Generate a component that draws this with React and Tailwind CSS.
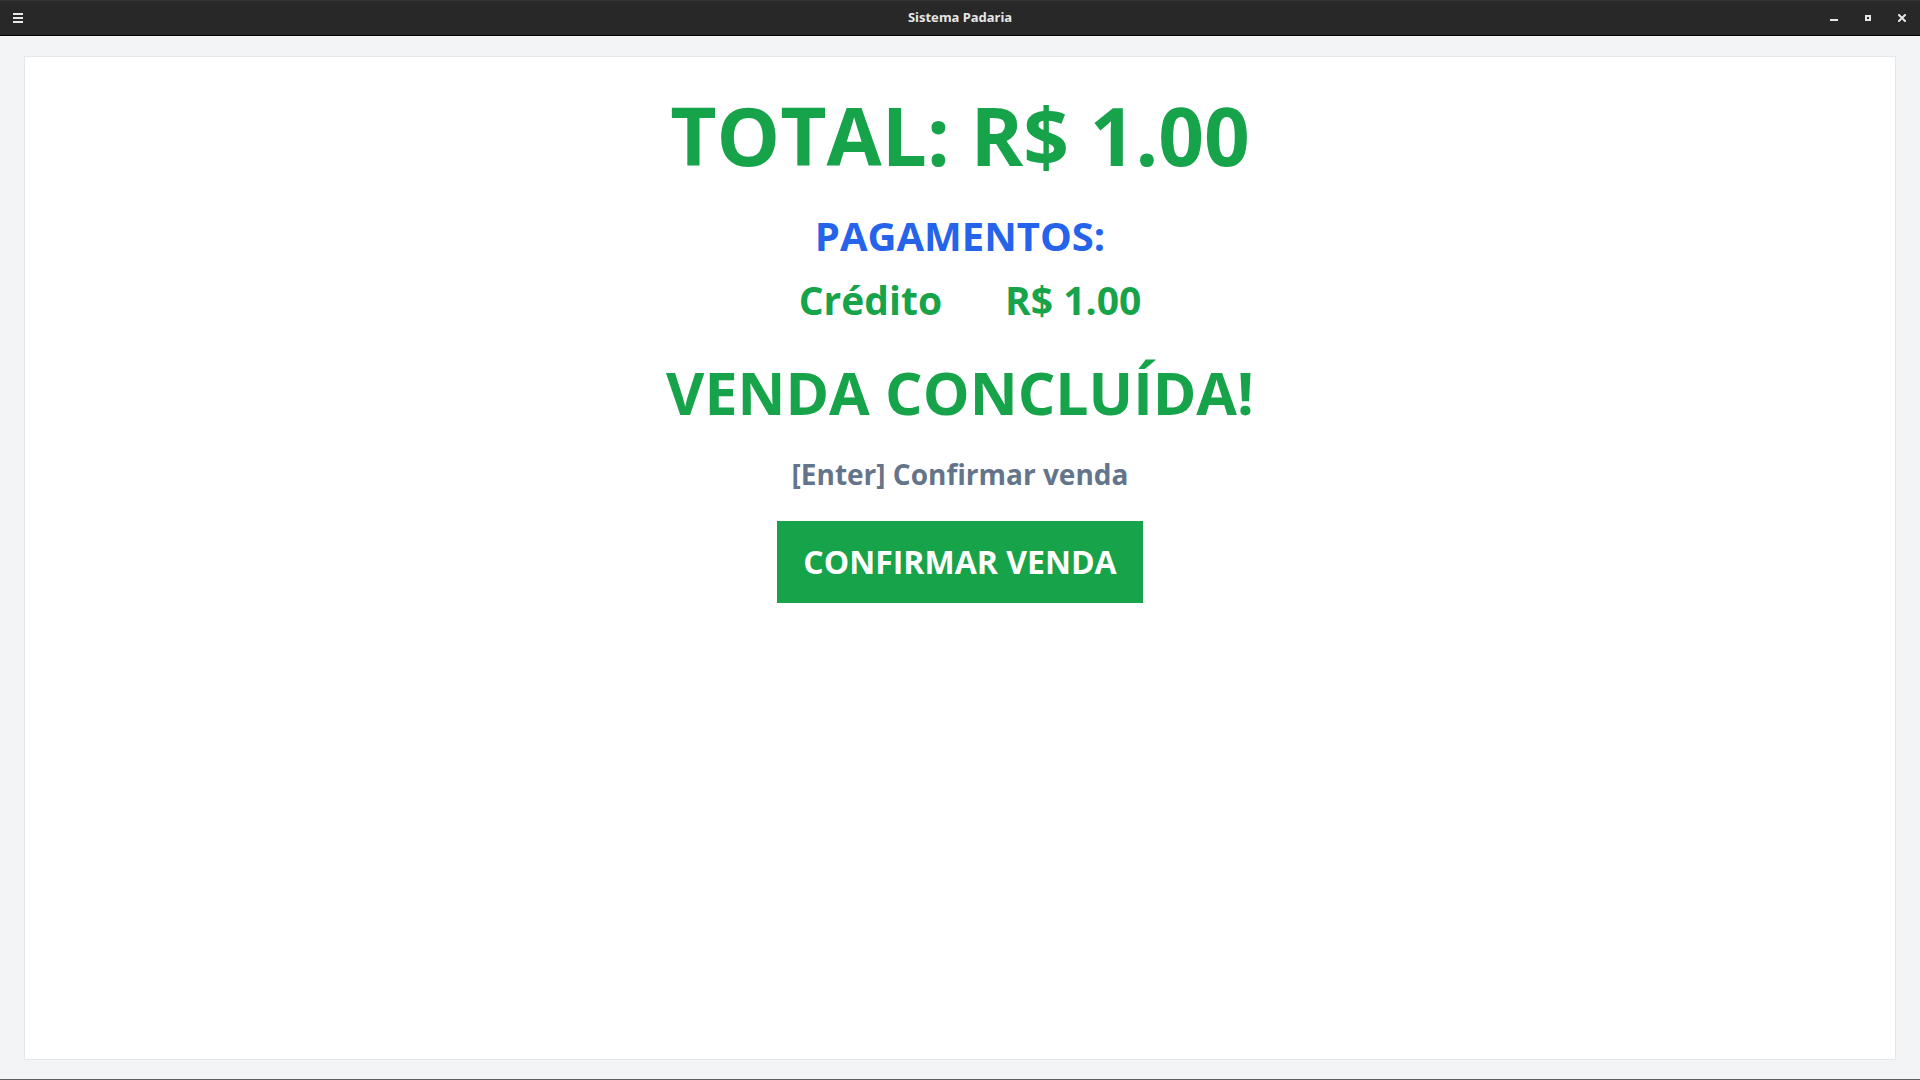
const font = { fontFamily: '"Open Sans", "Noto Sans", sans-serif' };

const TitleBar = () => (
  <div className="h-[36px] shrink-0 bg-[#282828] border-t border-t-[#353535] border-b border-b-black grid grid-cols-[1fr_auto_1fr] items-center">
    {/* hamburger */}
    <div className="pl-[13px]">
      <div className="flex flex-col gap-[2px] w-[10px]">
        <span className="h-[2px] bg-[#e8e8e8]" />
        <span className="h-[2px] bg-[#e8e8e8]" />
        <span className="h-[2px] bg-[#e8e8e8]" />
      </div>
    </div>
    <div className="text-[13px] font-bold text-[#e6e6e6] font-['Noto_Sans',sans-serif]">
      Sistema Padaria
    </div>
    <div className="flex items-center justify-end gap-[27px] pr-[14px]">
      <span className="w-[8px] h-[2px] bg-[#e6e6e6] mt-[4px]" />
      <span className="w-[6px] h-[6px] border-2 border-[#e6e6e6]" />
      <svg width="8" height="8" viewBox="0 0 8 8" className="-mt-[1px]">
        <path d="M1 1L7 7M7 1L1 7" stroke="#e6e6e6" strokeWidth="2" strokeLinecap="square" />
      </svg>
    </div>
  </div>
);

export default function App() {
  return (
    <div className="h-screen w-full flex flex-col overflow-hidden" style={font}>
      <TitleBar />
      <main className="flex-1 bg-[#f3f4f6] px-6 pt-[20px] pb-[19px] border-b border-b-[#5f5f5f]">
        <div className="h-full bg-white border border-[#e5e7eb] flex flex-col items-center pt-[38px]">
          <h1 className="text-[80px] leading-none font-bold text-[#16a34a]">TOTAL: R$ 1.00</h1>
          <h2 className="mt-[41px] text-[40px] leading-none font-bold text-[#2563eb]">PAGAMENTOS:</h2>
          <div className="mt-[24px] ml-[20px] flex items-center gap-[63px] text-[39px] leading-none font-bold text-[#16a34a]">
            <span>Crédito</span>
            <span>R$ 1.00</span>
          </div>
          <h2 className="mt-[44px] text-[59px] leading-none font-bold text-[#16a34a]">VENDA CONCLUÍDA!</h2>
          <p className="mt-[38px] text-[28px] leading-none font-bold text-[#64748b]">[Enter] Confirmar venda</p>
          <button className="mt-[33px] bg-[#16a34a] text-white text-[32px] font-bold leading-[42px] px-[26px] py-[20px]">
            CONFIRMAR VENDA
          </button>
        </div>
      </main>
    </div>
  );
}
